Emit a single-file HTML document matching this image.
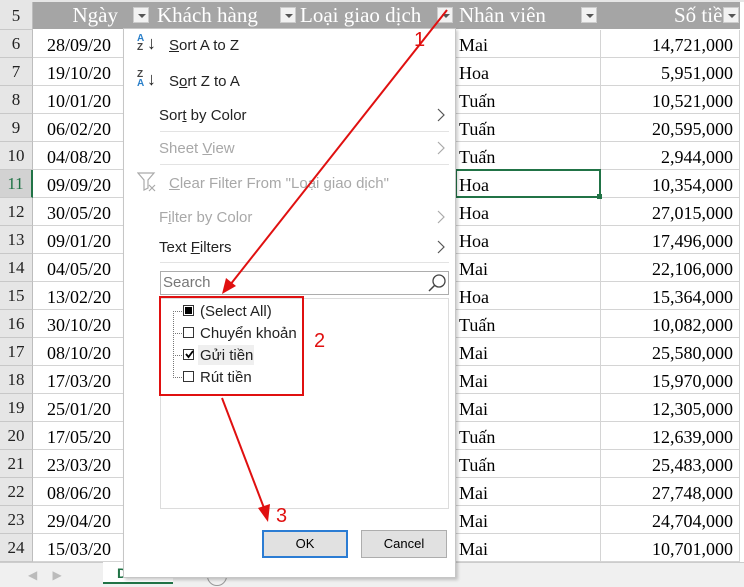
<!DOCTYPE html>
<html><head><meta charset="utf-8"><style>
body{margin:0;width:744px;height:586px;overflow:hidden;background:#fff;position:relative;font-family:"Liberation Serif",serif}
.a{position:absolute}
.rh{position:absolute;left:0;width:33px;height:28px;background:#e6e6e6;border-bottom:1px solid #c8c8c8;border-right:1px solid #bdbdbd;box-sizing:border-box;font-size:17px;text-align:center;line-height:28px;color:#222}
.c{position:absolute;height:28px;line-height:30px;font-size:18px;color:#000;box-sizing:border-box;border-bottom:1px solid #d4d4d4;border-right:1px solid #d4d4d4;white-space:nowrap;overflow:hidden}
.hd{position:absolute;top:2px;height:27px;background:#a5a5a5;color:#fff;font-size:21px;line-height:27px;white-space:nowrap;overflow:hidden}
.dd{position:absolute;top:7px;width:16px;height:16px;background:#f2f2f2;border:1px solid #ccc;box-sizing:border-box}
.dd:after{content:"";position:absolute;left:4px;top:6px;border-left:4px solid transparent;border-right:4px solid transparent;border-top:4px solid #555}
.m{font-family:"Liberation Sans",sans-serif;font-size:14.5px;color:#222;position:absolute}
.g{color:#a8a8a8}
.sep{position:absolute;left:160px;width:289px;height:1px;background:#e3e3e3}
.chev{position:absolute;left:436px}
.cb{position:absolute;width:11px;height:11px;border:1px solid #333;background:#fff;box-sizing:border-box}
</style></head><body>
<div class="a" style="left:0;top:0;width:744px;height:2px;background:#e6e6e6"></div>
<div class="rh" style="top:2px">5</div>
<div class="hd" style="left:33px;width:707px"></div>
<div class="hd" style="left:33px;width:100px"><span style="position:absolute;right:15px">Ngày</span></div>
<div class="hd" style="left:157px;width:122px">Khách hàng</div>
<div class="hd" style="left:300px;width:135px">Loại giao dịch</div>
<div class="hd" style="left:459px;width:120px">Nhân viên</div>
<div class="hd" style="left:600px;width:122px"><span style="position:absolute;left:74px">Số tiền</span></div>
<div class="dd" style="left:133px"></div><div class="dd" style="left:280px"></div><div class="dd" style="left:437px"></div><div class="dd" style="left:581px"></div><div class="dd" style="left:723px"></div>
<div class="a" style="left:740px;top:2px;width:4px;height:560px;background:#fff"></div>
<div id="rows"></div>
<script>
var d=[["28/09/20","Mai","14,721,000"],["19/10/20","Hoa","5,951,000"],["10/01/20","Tuấn","10,521,000"],["06/02/20","Tuấn","20,595,000"],["04/08/20","Tuấn","2,944,000"],["09/09/20","Hoa","10,354,000"],["30/05/20","Hoa","27,015,000"],["09/01/20","Hoa","17,496,000"],["04/05/20","Mai","22,106,000"],["13/02/20","Hoa","15,364,000"],["30/10/20","Tuấn","10,082,000"],["08/10/20","Mai","25,580,000"],["17/03/20","Mai","15,970,000"],["25/01/20","Mai","12,305,000"],["17/05/20","Tuấn","12,639,000"],["23/03/20","Tuấn","25,483,000"],["08/06/20","Mai","27,748,000"],["29/04/20","Mai","24,704,000"],["15/03/20","Mai","10,701,000"]];
var h="";
for(var i=0;i<d.length;i++){var t=30+i*28;var n=i+6;
h+='<div class="rh" style="top:'+t+'px;'+(n==11?'color:#217346;border-right:2px solid #217346;background:#d2d2d2':'')+'">'+n+'</div>';
h+='<div class="c" style="left:33px;top:'+t+'px;width:120px;padding-left:14px">'+d[i][0]+'</div>';
h+='<div class="c" style="left:455px;top:'+t+'px;width:146px;padding-left:4px">'+d[i][1]+'</div>';
h+='<div class="c" style="left:601px;top:'+t+'px;width:139px;text-align:right;padding-right:6px">'+d[i][2]+'</div>';}
document.getElementById("rows").innerHTML=h;
</script>
<div class="a" style="left:455px;top:169px;width:146px;height:29px;border:2px solid #217346;box-sizing:border-box"></div>
<div class="a" style="left:597px;top:194px;width:5px;height:5px;background:#217346"></div>
<div class="a" style="left:0;top:562px;width:744px;height:24px;background:#f0f0f0;border-top:1px solid #ccc"></div>
<div class="a" style="left:28px;top:568px;color:#bbb;font-size:12px;font-family:'DejaVu Sans'">◀&nbsp;&nbsp;&nbsp;&nbsp;▶</div>
<div class="a" style="left:103px;top:562px;width:70px;height:22px;background:#fff;border-bottom:2px solid #217346;font-family:'Liberation Sans';font-weight:bold;color:#217346;font-size:14px;padding-left:14px;box-sizing:border-box;line-height:22px">D</div>
<div class="a" style="left:207px;top:566px;width:18px;height:18px;border:1px solid #999;border-radius:50%"></div>
<div class="a" style="left:123px;top:28px;width:333px;height:550px;background:#fff;border:1px solid #c6c6c6;box-sizing:border-box;box-shadow:2px 2px 3px rgba(0,0,0,.2)"></div>
<div class="m" style="left:137px;top:34px;font-size:10px;line-height:9px;color:#2a7fc9;font-weight:bold">A<br><span style="color:#444">Z</span></div>
<div class="m" style="left:147px;top:33px;font-size:18px">↓</div>
<div class="m" style="left:169px;top:37px;font-size:15px"><u>S</u>ort A to Z</div>
<div class="m" style="left:137px;top:70px;font-size:10px;line-height:9px;color:#2a7fc9;font-weight:bold"><span style="color:#444">Z</span><br>A</div>
<div class="m" style="left:147px;top:69px;font-size:18px">↓</div>
<div class="m" style="left:169px;top:73px;font-size:15px">S<u>o</u>rt Z to A</div>
<div class="m" style="left:159px;top:107px;font-size:15px">Sor<u>t</u> by Color</div>
<svg class="chev" style="top:107px" width="10" height="16"><path d="M2 2l6 6-6 6" fill="none" stroke="#555" stroke-width="1.2"/></svg>
<div class="sep" style="top:131px"></div>
<div class="m g" style="left:159px;top:140px;font-size:15px">Sheet <u>V</u>iew</div>
<svg class="chev" style="top:140px" width="10" height="16"><path d="M2 2l6 6-6 6" fill="none" stroke="#aaa" stroke-width="1.2"/></svg>
<div class="sep" style="top:164px"></div>
<svg class="a" style="left:137px;top:172px" width="22" height="22"><path d="M1 1h16l-6 7v8l-4 2V8z" fill="none" stroke="#aaa" stroke-width="1.2"/><path d="M12 13l6 6M18 13l-6 6" stroke="#aaa" stroke-width="1.2"/></svg>
<div class="m g" style="left:169px;top:175px;font-size:15px"><u>C</u>lear Filter From "Loại giao dịch"</div>
<div class="m g" style="left:159px;top:209px;font-size:15px">F<u>i</u>lter by Color</div>
<svg class="chev" style="top:209px" width="10" height="16"><path d="M2 2l6 6-6 6" fill="none" stroke="#aaa" stroke-width="1.2"/></svg>
<div class="m" style="left:159px;top:239px;font-size:15px">Text <u>F</u>ilters</div>
<svg class="chev" style="top:239px" width="10" height="16"><path d="M2 2l6 6-6 6" fill="none" stroke="#555" stroke-width="1.2"/></svg>
<div class="sep" style="top:262px"></div>
<div class="a" style="left:160px;top:271px;width:289px;height:24px;border:1px solid #adadad;box-sizing:border-box"></div>
<div class="m" style="left:163px;top:274px;color:#777;font-size:15px">Search</div>
<svg class="a" style="left:427px;top:273px" width="20" height="20"><circle cx="12" cy="8" r="6" fill="none" stroke="#444" stroke-width="1.3"/><path d="M8 12L2 18" stroke="#444" stroke-width="1.5"/></svg>
<div class="a" style="left:160px;top:298px;width:289px;height:211px;border:1px solid #dcdcdc;box-sizing:border-box"></div>
<div class="a" style="left:173px;top:311px;width:1px;height:67px;border-left:1px dotted #777"></div>
<div class="a" style="left:173px;top:311px;width:9px;border-top:1px dotted #777"></div>
<div class="a" style="left:173px;top:333px;width:9px;border-top:1px dotted #777"></div>
<div class="a" style="left:173px;top:355px;width:9px;border-top:1px dotted #777"></div>
<div class="a" style="left:173px;top:377px;width:9px;border-top:1px dotted #777"></div>
<div class="cb" style="left:183px;top:305px"><div style="margin:1px;width:7px;height:7px;background:#000"></div></div>
<div class="m" style="left:200px;top:303px;font-size:15px">(Select All)</div>
<div class="cb" style="left:183px;top:327px"></div><div class="m" style="left:200px;top:325px;font-size:15px">Chuyển khoản</div>
<div class="a" style="left:198px;top:345px;width:56px;height:20px;background:#efefef"></div>
<div class="cb" style="left:183px;top:349px"></div>
<svg class="a" style="left:184px;top:349px" width="11" height="11"><path d="M2 5l2.5 3L9 2" fill="none" stroke="#000" stroke-width="1.8"/></svg>
<div class="m" style="left:200px;top:347px;font-size:15px">Gửi tiền</div>
<div class="cb" style="left:183px;top:371px"></div><div class="m" style="left:200px;top:369px;font-size:15px">Rút tiền</div>
<div class="a" style="left:262px;top:530px;width:86px;height:28px;background:#e1e1e1;border:2px solid #2b7cd3;box-sizing:border-box;font-family:'Liberation Sans';font-size:13px;text-align:center;line-height:24px">OK</div>
<div class="a" style="left:361px;top:530px;width:86px;height:28px;background:#e1e1e1;border:1px solid #adadad;box-sizing:border-box;font-family:'Liberation Sans';font-size:13px;text-align:center;line-height:26px">Cancel</div>
<div class="a" style="left:159px;top:296px;width:145px;height:100px;border:2px solid #e01010;box-sizing:border-box"></div>
<svg class="a" style="left:0;top:0" width="744" height="586">
<path d="M447 10L230 285" stroke="#e01010" stroke-width="2"/><path d="M222 294l4-16 10 8z" fill="#e01010"/>
<path d="M222 398L264 508" stroke="#e01010" stroke-width="2"/><path d="M268 522l-10-14 12-4z" fill="#e01010"/>
</svg>
<div class="m" style="left:414px;top:29px;color:#e01010;font-size:20px">1</div>
<div class="m" style="left:314px;top:330px;color:#e01010;font-size:20px">2</div>
<div class="m" style="left:276px;top:505px;color:#e01010;font-size:20px">3</div>
</body></html>
